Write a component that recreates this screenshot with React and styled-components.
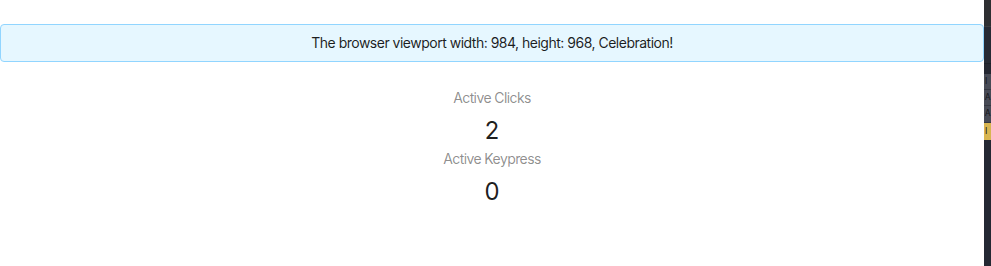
import styled, { createGlobalStyle } from "styled-components";

const GlobalStyle = createGlobalStyle`
  html, body {
    margin: 0;
    padding: 0;
    background: #fff;
  }
  body {
    font-family: Inter, "Noto Sans", "Liberation Sans", sans-serif;
    font-size: 14px;
    line-height: 1.5715;
    color: rgba(0, 0, 0, 0.85);
  }
`;

const Page = styled.div`
  display: flex;
  height: 266px;
  overflow: hidden;
`;

const Main = styled.main`
  flex: 1;
  padding-top: 24px;
`;

const Alert = styled.div`
  box-sizing: border-box;
  height: 38px;
  padding: 8px 15px;
  border: 1px solid #91d5ff;
  border-radius: 4px;
  background: #e6f7ff;
  color: rgba(0, 0, 0, 0.88);
  text-align: center;
  font-size: 14px;
  line-height: 20px;
  letter-spacing: -0.5px;
`;

const Stats = styled.div`
  display: flex;
  flex-direction: column;
  align-items: center;
  padding-top: 25px;
`;

const Stat = styled.div`
  text-align: center;
`;

const StatTitle = styled.div`
  margin-bottom: 4px;
  color: rgba(0, 0, 0, 0.45);
  font-size: 14px;
  line-height: 22px;
  letter-spacing: -0.6px;
`;

const StatValue = styled.div`
  color: rgba(0, 0, 0, 0.88);
  font-size: 24px;
  line-height: 35px;
  font-variant-numeric: tabular-nums;
`;

const Panel = styled.aside`
  width: 7px;
  display: flex;
  flex-direction: column;
  background: #242833;
`;

const PanelBlock = styled.div`
  height: ${(p) => p.$h}px;
  background: ${(p) => p.$bg};
  border-bottom: ${(p) => (p.$line ? `1px solid ${p.$line}` : "none")};
  color: #15161a;
  font-family: "DejaVu Sans", sans-serif;
  font-size: 8px;
  line-height: ${(p) => p.$h}px;
  padding-left: 1px;
  overflow: hidden;
  white-space: nowrap;
`;

const stats = [
  { title: "Active Clicks", value: 2 },
  { title: "Active Keypress", value: 0 },
];

export default function App() {
  return (
    <>
      <GlobalStyle />
      <Page>
        <Main>
          <Alert>The browser viewport width: 984, height: 968, Celebration!</Alert>
          <Stats>
            {stats.map((s) => (
              <Stat key={s.title}>
                <StatTitle>{s.title}</StatTitle>
                <StatValue>{s.value}</StatValue>
              </Stat>
            ))}
          </Stats>
        </Main>
        <Panel>
          <PanelBlock $h={26} $bg="#2e2f32" $line="#3b3c40" />
          <PanelBlock $h={36} $bg="#262a34" $line="#1d2028" />
          <PanelBlock $h={10} $bg="#242731" />
          <PanelBlock $h={15} $bg="#474a55" $line="#353842">I</PanelBlock>
          <PanelBlock $h={15} $bg="#474a55" $line="#353842">A</PanelBlock>
          <PanelBlock $h={16} $bg="#474a55" $line="#353842">A</PanelBlock>
          <PanelBlock $h={17} $bg="#d8b550">I</PanelBlock>
        </Panel>
      </Page>
    </>
  );
}
